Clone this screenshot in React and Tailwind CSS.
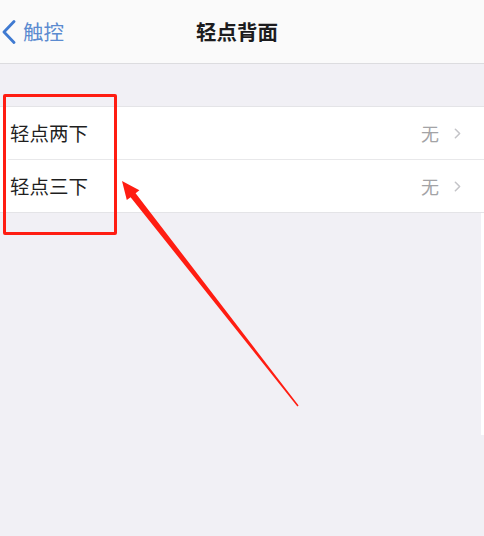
import { ChevronRight } from 'lucide-react';

const font = { fontFamily: '"Noto Sans CJK SC", "Noto Sans", sans-serif' };

const Row = ({ label }) => (
  <div className="flex h-[52px] items-center bg-white pl-[10px] pr-[18px]">
    <span className="flex-1 text-[19.5px] leading-none text-[#1f1f1f]">{label}</span>
    <span className="text-[18px] leading-none text-[#a3a3a6]">无</span>
    <ChevronRight className="ml-[10px] h-[17px] w-[17px] text-[#c4c4c8]" strokeWidth={2.2} />
  </div>
);

const App = () => {
  return (
    <div className="relative flex h-[536px] w-[484px] flex-col overflow-hidden bg-[#f1f0f5]" style={font}>
      <header className="flex h-[64px] items-center border-b border-[#dcdcdf] bg-[#fafafa]">
        <div className="flex w-[120px] items-center">
          <svg width="16" height="24" viewBox="0 0 16 24" className="ml-[1px]">
            <polyline
              points="13,1.5 3,12 13,22.5"
              fill="none"
              stroke="#3f7ad1"
              strokeWidth="2.8"
              strokeLinecap="round"
              strokeLinejoin="round"
            />
          </svg>
          <span className="ml-[6px] text-[20.5px] leading-none text-[#5b8bd0]">触控</span>
        </div>
        <div className="flex-1 pr-[130px] text-center text-[20.5px] font-bold leading-none text-[#1c1c1e]">
          轻点背面
        </div>
      </header>

      <div className="h-[42px]" />

      <div className="border-y border-[#e4e4e7] bg-white">
        <Row label="轻点两下" />
        <div className="ml-[8px] h-px bg-[#e8e8ea]" />
        <Row label="轻点三下" />
      </div>

      <div className="flex flex-1">
        <div className="flex-1" />
        <div className="h-[222px] w-[3px] bg-white" />
      </div>

      {/* annotation overlay */}
      <div className="absolute left-[3px] top-[94px] h-[141px] w-[114px] rounded-[2px] border-[3px] border-[#ff1d12]" />
      <svg className="absolute left-0 top-0" width="484" height="536" viewBox="0 0 484 536">
        <polygon
          fill="#ff1d12"
          points="122,181 139.4,190.3 135.6,193.2 298.6,405.6 297.4,406.4 130.6,197.2 126.8,200.1"
        />
      </svg>
    </div>
  );
};

export default App;
